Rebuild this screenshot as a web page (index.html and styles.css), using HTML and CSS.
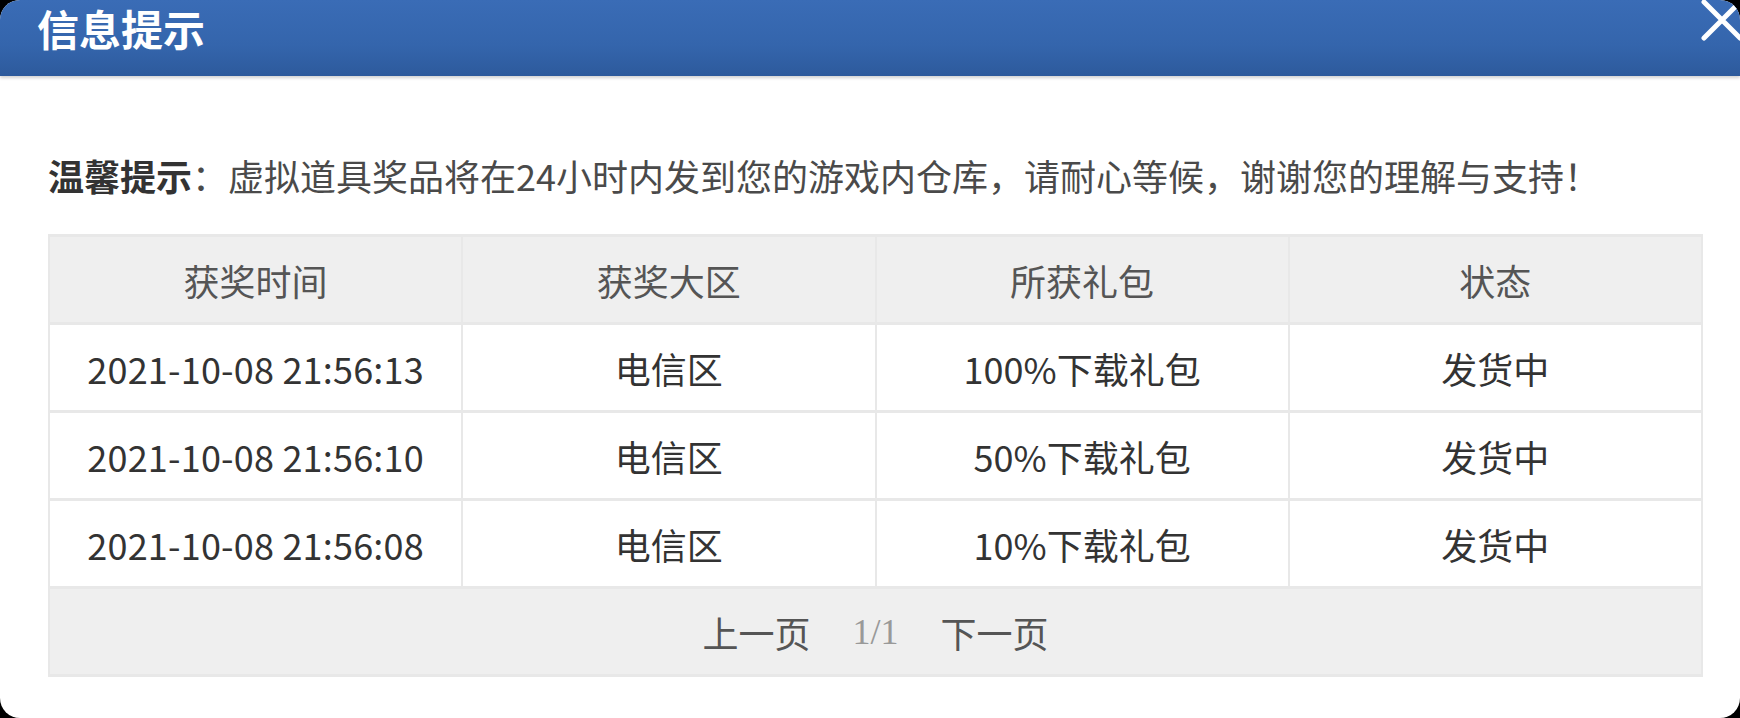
FILE: index.html
```html
<!DOCTYPE html>
<html lang="zh-CN">
<head>
    <meta charset="UTF-8">
    <title>信息提示</title>
    <link rel="stylesheet" href="styles.css">
</head>
<body>
    <div class="dialog">
        <div class="dialog-header">
            <h1>信息提示</h1>
            <svg class="close-btn" width="44" height="44" viewBox="0 0 44 44">
                <path d="M4 40 L40 4 M4 4 L40 40" stroke="#fff" stroke-width="5" stroke-linecap="round" fill="none"/>
            </svg>
        </div>

        <div class="dialog-body">
            <p class="tip"><b>温馨提示</b>：虚拟道具奖品将在24小时内发到您的游戏内仓库，请耐心等候，谢谢您的理解与支持！</p>

            <table class="prize-table">
                <thead>
                    <tr>
                        <th>获奖时间</th>
                        <th>获奖大区</th>
                        <th>所获礼包</th>
                        <th>状态</th>
                    </tr>
                </thead>
                <tbody>
                    <tr>
                        <td class="time">2021-10-08 21:56:13</td>
                        <td>电信区</td>
                        <td>100%下载礼包</td>
                        <td>发货中</td>
                    </tr>
                    <tr>
                        <td class="time">2021-10-08 21:56:10</td>
                        <td>电信区</td>
                        <td>50%下载礼包</td>
                        <td>发货中</td>
                    </tr>
                    <tr>
                        <td class="time">2021-10-08 21:56:08</td>
                        <td>电信区</td>
                        <td>10%下载礼包</td>
                        <td>发货中</td>
                    </tr>
                </tbody>
                <tfoot>
                    <tr>
                        <td colspan="4">
                            <div class="pager">
                                <a class="page-link">上一页</a>
                                <span class="page-num">1/1</span>
                                <a class="page-link">下一页</a>
                            </div>
                        </td>
                    </tr>
                </tfoot>
            </table>
        </div>
    </div>
</body>
</html>
```

FILE: styles.css
```css
body {
    margin: 0;
    background: #000;
    font-family: "Noto Sans CJK SC", "Noto Sans", sans-serif;
}

.dialog {
    width: 1740px;
    height: 718px;
    background: #fff;
    border-radius: 20px;
    overflow: hidden;
}

.dialog-header {
    position: relative;
    height: 76px;
    background: linear-gradient(180deg, #3a6cb6 0%, #3465ac 60%, #2d5a9c 100%);
    box-shadow: 0 2px 3px rgba(0, 0, 0, 0.18);
}

.dialog-header h1 {
    margin: 0;
    padding: 2px 0 0 37px;
    font-size: 42px;
    line-height: 52px;
    font-weight: bold;
    color: #fff;
}

.close-btn {
    position: absolute;
    top: -2px;
    left: 1700px;
}

.dialog-body {
    padding: 79px 37px 0 48px;
}

.tip {
    margin: 0 0 39px;
    font-size: 36px;
    line-height: 40px;
    color: #4a4a4a;
    white-space: nowrap;
}

.tip b {
    color: #333;
}

.prize-table {
    width: 100%;
    table-layout: fixed;
    border-collapse: collapse;
    border: 2px solid #e8e8e8;
    font-size: 36px;
    color: #333;
}

.prize-table th,
.prize-table td {
    height: 85px;
    padding: 0;
    text-align: center;
    border: 2px solid #e8e8e8;
    border-width: 3px 2px;
    white-space: nowrap;
}

.prize-table th {
    background: #efefef;
    font-weight: normal;
    color: #555;
}

.prize-table .time {
    letter-spacing: 0.2px;
}

.prize-table tfoot td {
    background: #efefef;
}

.pager {
    display: flex;
    justify-content: center;
    align-items: center;
    gap: 42px;
    color: #555;
}

.page-num {
    color: #999;
    font-family: "Liberation Serif", serif;
}
```
